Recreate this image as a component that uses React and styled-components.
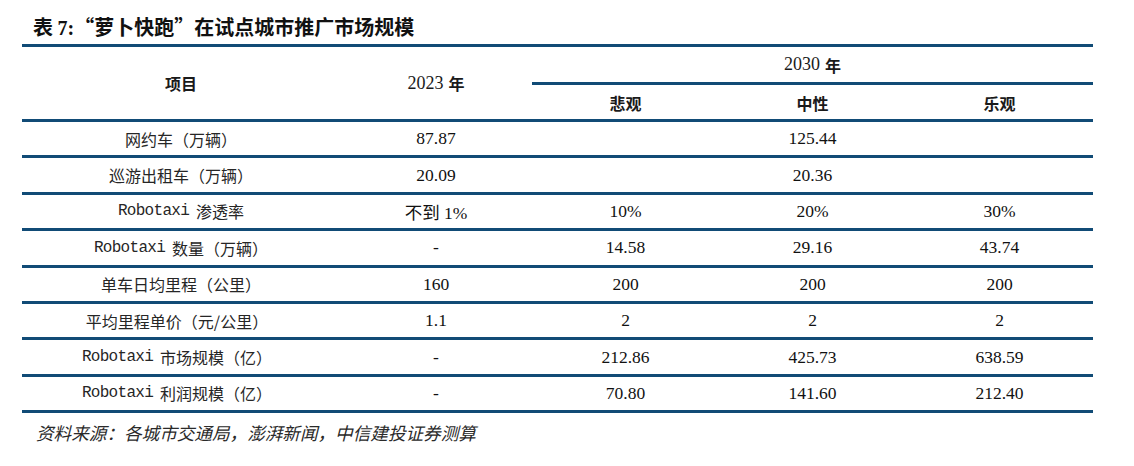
import React from 'react'
import styled, { createGlobalStyle } from 'styled-components'

const GlobalStyle = createGlobalStyle`
    body {
        margin: 0;
        background: #ffffff;
    }
`;

const LINE = '#114b76';

const Page = styled.div`
    width: 1071px;
    padding-left: 22px;
    color: #1a1a1a;
`;

const Title = styled.div`
    box-sizing: border-box;
    height: 44px;
    padding-top: 16px;
    padding-left: 11px;
    font-family: "Noto Sans CJK SC", sans-serif;
    font-weight: 700;
    font-size: 20px;
    line-height: 22px;
    color: #111;
`;

const Num = styled.span`
    font-family: "Liberation Serif", "Noto Sans CJK SC", serif;
`;

const Grid = styled.div`
    display: grid;
    grid-template-columns: 318px 192px 187px 187px 187px;
    grid-template-rows: 38px 37px;
    grid-auto-rows: 36.4px;
    border-top: 3px solid ${LINE};
`;

const Cell = styled.div`
    box-sizing: border-box;
    display: flex;
    align-items: center;
    justify-content: center;
    border-bottom: 3px solid ${LINE};
    grid-row: ${p => p.$rows ? `span ${p.$rows}` : 'auto'};
    grid-column: ${p => p.$cols ? `span ${p.$cols}` : 'auto'};
    white-space: pre;
`;

const HeadCell = styled(Cell)`
    font-family: "Liberation Serif", "Noto Sans CJK SC", serif;
    font-size: 16px;
    font-weight: 700;
    padding-top: ${p => p.$low ? '2px' : '0'};
`;

const YearNum = styled.span`
    font-weight: 400;
    font-size: 18px;
    margin-right: 5px;
`;

const Label = styled(Cell)`
    font-family: "Noto Sans CJK SC", sans-serif;
    font-size: 16px;
    color: #262626;
    padding-right: ${p => p.$shift ? '8px' : '0'};
`;

const Mono = styled.span`
    font-family: "Liberation Mono", monospace;
    font-size: 16px;
    letter-spacing: -0.7px;
    margin-right: 7px;
`;

const Value = styled(Cell)`
    font-family: "Liberation Serif", "Noto Sans CJK SC", serif;
    font-size: 17.5px;
    color: #111;
`;

const Source = styled.div`
    margin-top: 10px;
    padding-left: 14px;
    font-family: "Noto Sans CJK SC", sans-serif;
    font-style: italic;
    font-size: 17.6px;
    line-height: 20px;
    color: #2a2a2a;
`;

const rows = [
    { label: '网约车（万辆）', values: ['87.87', '125.44'] },
    { label: '巡游出租车（万辆）', values: ['20.09', '20.36'] },
    { latin: 'Robotaxi', label: '渗透率', values: ['不到 1%', '10%', '20%', '30%'] },
    { latin: 'Robotaxi', label: '数量（万辆）', values: ['-', '14.58', '29.16', '43.74'] },
    { label: '单车日均里程（公里）', values: ['160', '200', '200', '200'] },
    { label: '平均里程单价（元/公里）', values: ['1.1', '2', '2', '2'], shift: true },
    { latin: 'Robotaxi', label: '市场规模（亿）', values: ['-', '212.86', '425.73', '638.59'], shift: true },
    { latin: 'Robotaxi', label: '利润规模（亿）', values: ['-', '70.80', '141.60', '212.40'], shift: true },
];

export default function App() {
    return (
        <>
            <GlobalStyle />
            <Page>
                <Title>表 <Num>7:</Num>“萝卜快跑”在试点城市推广市场规模</Title>
                <Grid>
                    <HeadCell $rows={2}>项目</HeadCell>
                    <HeadCell $rows={2}><YearNum>2023</YearNum>年</HeadCell>
                    <HeadCell $cols={3}><YearNum>2030</YearNum>年</HeadCell>
                    <HeadCell $low>悲观</HeadCell>
                    <HeadCell $low>中性</HeadCell>
                    <HeadCell $low>乐观</HeadCell>

                    {rows.map(row => (
                        <React.Fragment key={row.label}>
                            <Label $shift={row.shift}>
                                {row.latin && <Mono>{row.latin}</Mono>}
                                {row.label}
                            </Label>
                            <Value>{row.values[0]}</Value>
                            {row.values.length === 2
                                ? <Value $cols={3}>{row.values[1]}</Value>
                                : row.values.slice(1).map((v, i) => <Value key={i}>{v}</Value>)}
                        </React.Fragment>
                    ))}
                </Grid>
                <Source>资料来源：各城市交通局，澎湃新闻，中信建投证券测算</Source>
            </Page>
        </>
    )
}
